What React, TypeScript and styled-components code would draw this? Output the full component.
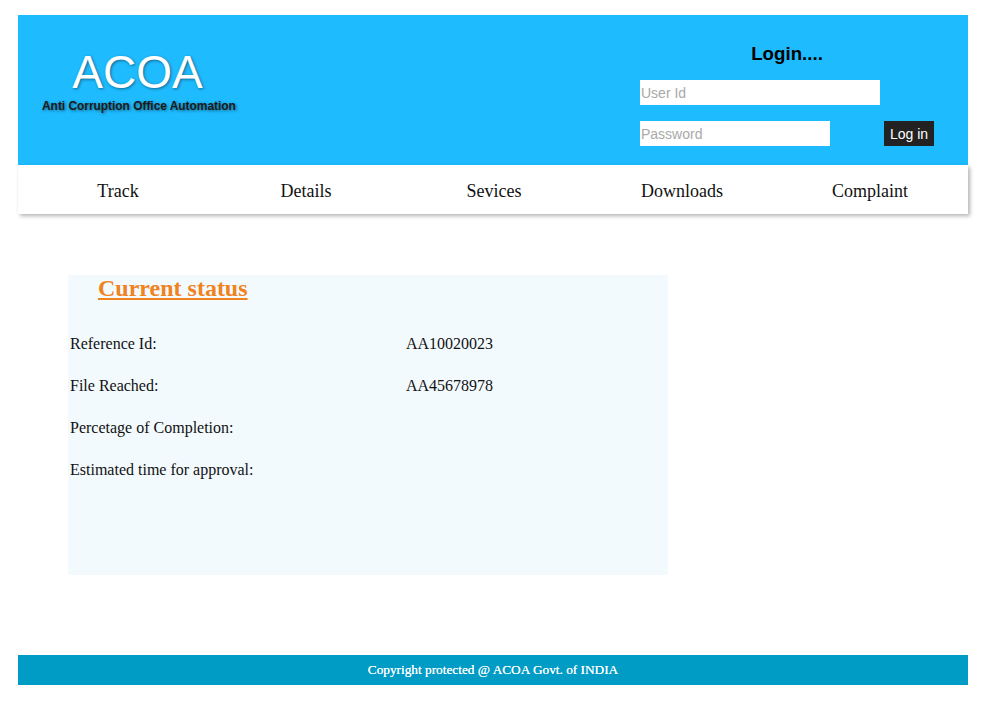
import React from "react";
import styled, { createGlobalStyle } from "styled-components";

const Global = createGlobalStyle`
  html, body { margin: 0; padding: 0; background: #ffffff; }
  body { font-family: "Liberation Serif", "Times New Roman", serif; color: #000; }
`;

const Page = styled.div`
  width: 950px;
  padding: 15px 0 0 18px;
`;

const Header = styled.header`
  height: 150px;
  background: #1ebbff;
  display: flex;
  justify-content: space-between;
  align-items: flex-start;
  padding: 0 34px 0 24px;
  box-sizing: border-box;
`;

const Brand = styled.div`
  display: flex;
  flex-direction: column;
  align-items: center;
  padding-top: 31px;
  font-family: "Liberation Sans", Arial, sans-serif;
`;

const Logo = styled.h1`
  margin: 0 3px 0 0;
  font-size: 46px;
  font-weight: normal;
  line-height: 52px;
  color: #ffffff;
  text-shadow: 1px 1px 3px rgba(0, 0, 0, 0.45);
`;

const Tagline = styled.div`
  font-size: 12px;
  font-weight: bold;
  color: #1a1a1a;
  line-height: 14px;
  margin-top: 1px;
  letter-spacing: -0.05px;
  text-shadow: 1px 1px 3px rgba(0, 0, 0, 0.5);
`;

const LoginBox = styled.form`
  width: 294px;
  padding-top: 27px;
  font-family: "Liberation Sans", Arial, sans-serif;
`;

const LoginTitle = styled.h3`
  margin: 0 0 14px;
  text-align: center;
  font-size: 18.72px;
  font-weight: bold;
  line-height: 24px;
  color: #000;
`;

const FieldRow = styled.div`
  display: flex;
  align-items: center;
  justify-content: space-between;
  height: 25px;
  margin-bottom: 16px;
`;

const Input = styled.input<{ $w: number }>`
  width: ${(p) => p.$w}px;
  height: 25px;
  box-sizing: border-box;
  border: none;
  outline: none;
  padding: 0 1px;
  margin: 0;
  background: #ffffff;
  font-family: "Liberation Sans", Arial, sans-serif;
  font-size: 14px;
  color: #000;
  &::placeholder { color: #a9a9a9; }
`;

const Button = styled.button`
  width: 50px;
  height: 25px;
  border: none;
  margin: 0;
  padding: 0;
  background: #222222;
  color: #ffffff;
  font-family: "Liberation Sans", Arial, sans-serif;
  font-size: 14px;
  cursor: pointer;
`;

const Nav = styled.nav`
  height: 49px;
  background: #ffffff;
  box-shadow: 2px 2px 4px rgba(0, 0, 0, 0.3);
  display: grid;
  grid-template-columns: repeat(5, 188px);
  padding-left: 6px;
  box-sizing: border-box;
  align-items: center;
`;

const NavItem = styled.a`
  text-align: center;
  font-size: 18px;
  color: #111;
  text-decoration: none;
  line-height: 49px;
  padding-top: 2px;
`;

const Main = styled.main`
  padding: 61px 0 80px 50px;
`;

const StatusCard = styled.section`
  width: 600px;
  height: 300px;
  background: #f3fafe;
  box-sizing: border-box;
`;

const StatusTitle = styled.h2`
  margin: 0 0 21px;
  padding: 0 0 0 30px;
  font-size: 24px;
  line-height: 27px;
  font-weight: bold;
  color: #f0831e;
  text-decoration: underline;
  text-decoration-thickness: 2px;
  text-underline-offset: 2px;
`;

const Row = styled.div`
  display: grid;
  grid-template-columns: 336px 1fr;
  padding-left: 2px;
  height: 42px;
  align-items: center;
  font-size: 16px;
  color: #111;
`;

const Footer = styled.footer`
  height: 30px;
  background: #009cc6;
  color: #ffffff;
  display: flex;
  align-items: center;
  justify-content: center;
  font-size: 13.3px;
  font-weight: normal;
  text-shadow: 0 0 0.4px #ffffff;
`;

const rows: [string, string][] = [
  ["Reference Id:", "AA10020023"],
  ["File Reached:", "AA45678978"],
  ["Percetage of Completion:", ""],
  ["Estimated time for approval:", ""],
];

export default function App() {
  return (
    <>
      <Global />
      <Page>
        <Header>
          <Brand>
            <Logo>ACOA</Logo>
            <Tagline>Anti Corruption Office Automation</Tagline>
          </Brand>
          <LoginBox onSubmit={(e) => e.preventDefault()}>
            <LoginTitle>Login....</LoginTitle>
            <FieldRow>
              <Input $w={240} placeholder="User Id" />
            </FieldRow>
            <FieldRow>
              <Input $w={190} type="password" placeholder="Password" />
              <Button type="submit">Log in</Button>
            </FieldRow>
          </LoginBox>
        </Header>
        <Nav>
          {["Track", "Details", "Sevices", "Downloads", "Complaint"].map((n) => (
            <NavItem key={n} href="#">
              {n}
            </NavItem>
          ))}
        </Nav>
        <Main>
          <StatusCard>
            <StatusTitle>Current status</StatusTitle>
            {rows.map(([k, v]) => (
              <Row key={k}>
                <span>{k}</span>
                <span>{v}</span>
              </Row>
            ))}
          </StatusCard>
        </Main>
        <Footer>Copyright protected @ ACOA Govt. of INDIA</Footer>
      </Page>
    </>
  );
}
